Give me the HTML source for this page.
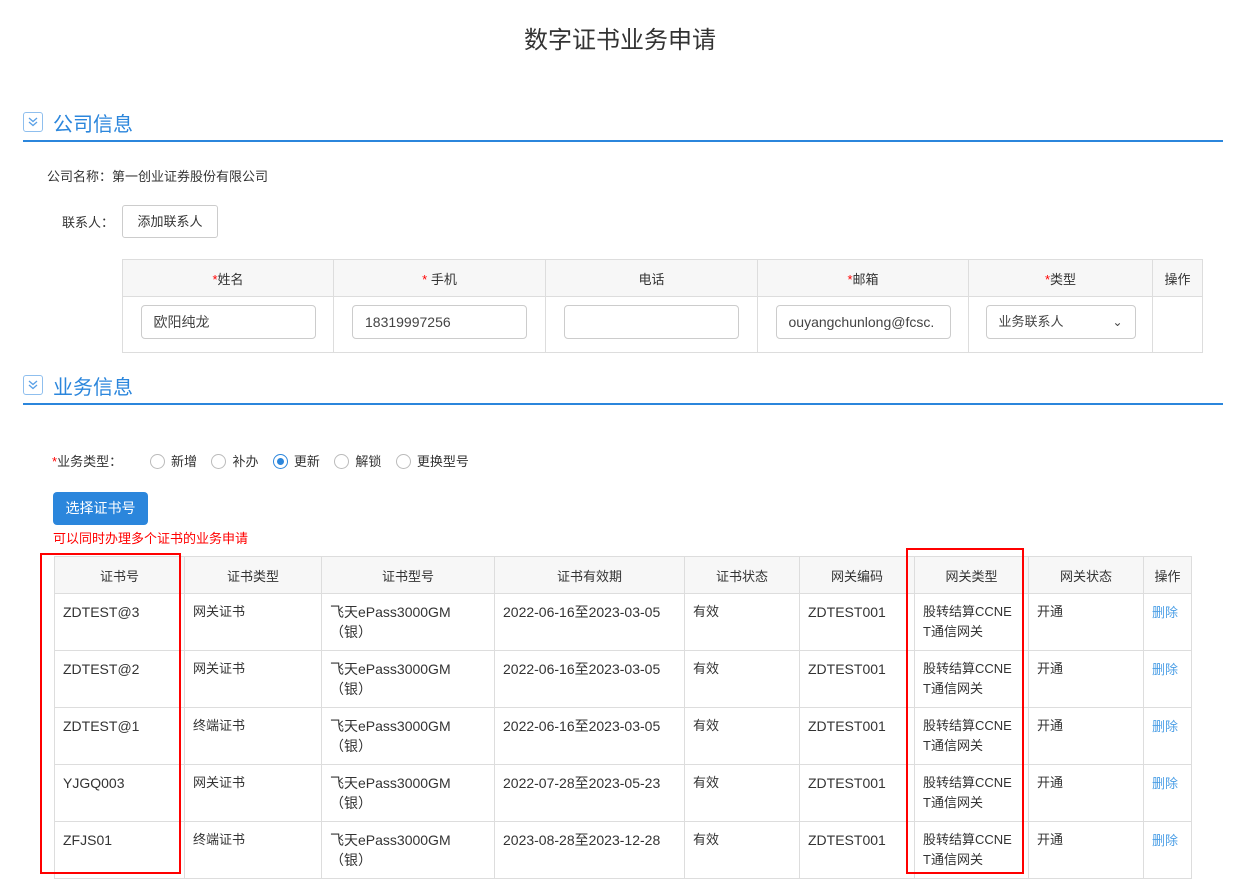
<!DOCTYPE html>
<html><head><meta charset="utf-8"><style>
*{box-sizing:border-box;margin:0;padding:0}
body{width:1240px;height:882px;background:#fff;font-family:"Liberation Sans","Noto Sans CJK SC",sans-serif;color:#333;font-size:13px;position:relative;overflow:hidden}
.a{position:absolute}
.title{left:0;width:1240px;top:20px;text-align:center;font-size:24px;color:#333}
.sec{left:23px;width:1200px;height:24px;border-bottom:2px solid #2b86dc}
.sec .ic{position:absolute;left:0;top:-6px;width:20px;height:20px;border:1px solid #8fbfee;border-radius:3px}
.sec .t{position:absolute;left:30px;top:-10px;font-size:20px;color:#2b86dc}
table{border-collapse:collapse;position:absolute}
td,th{border:1px solid #ddd;font-weight:normal;font-size:13px}
th{background:#f7f7f7;height:37px}
.inp{border:1px solid #ccc;border-radius:4px;height:34px;padding:0 12px;line-height:32px;font-size:14px;color:#444;margin:0 auto}
.t1 td{vertical-align:top;padding-top:8px}
.req{color:#f00}
.t2 td{vertical-align:top;padding:8px 8px 0;font-size:14px;line-height:20px;height:57px}
.t2 th{font-size:13px}
.radio{display:inline-block;width:15px;height:15px;border:1px solid #bbb;border-radius:50%;vertical-align:-3px;margin-right:6px}
.on{border-color:#2b86dc;position:relative}
.on:after{content:"";position:absolute;left:3px;top:3px;width:7px;height:7px;border-radius:50%;background:#2b86dc}
.lnk{color:#4a9ee6;font-size:13px}
</style></head><body>
<div class="a title">数字证书业务申请</div>
<div class="a sec" style="top:118px"><div class="ic"><svg width="18" height="18" viewBox="0 0 18 18"><path d="M5 5l4 3.5 4-3.5M5 9l4 3.5 4-3.5" fill="none" stroke="#5aa0e6" stroke-width="1.3"/></svg></div><div class="t">公司信息</div></div>
<div class="a" style="left:47px;top:166px">公司名称：第一创业证券股份有限公司</div>
<div class="a" style="left:62px;top:212px">联系人：</div>
<div class="a" style="left:122px;top:205px;width:96px;height:33px;border:1px solid #ccc;border-radius:3px;text-align:center;line-height:31px">添加联系人</div>
<table class="t1" style="left:122px;top:259px;width:1081px">
<tr><th style="width:211px;height:36px"><span class="req">*</span>姓名</th><th style="width:212px"><span class="req">* </span>手机</th><th style="width:212px">电话</th><th style="width:211px"><span class="req">*</span>邮箱</th><th style="width:184px"><span class="req">*</span>类型</th><th>操作</th></tr>
<tr style="height:56px"><td><div class="inp" style="width:175px">欧阳纯龙</div></td><td><div class="inp" style="width:175px">18319997256</div></td><td><div class="inp" style="width:175px"></div></td><td><div class="inp" style="width:175px;overflow:hidden;white-space:nowrap">ouyangchunlong@fcsc.</div></td><td><div class="inp" style="width:150px;font-size:13px">业务联系人<span style="float:right;font-size:12px">⌄</span></div></td><td></td></tr>
</table>
<div class="a sec" style="top:381px"><div class="ic"><svg width="18" height="18" viewBox="0 0 18 18"><path d="M5 5l4 3.5 4-3.5M5 9l4 3.5 4-3.5" fill="none" stroke="#5aa0e6" stroke-width="1.3"/></svg></div><div class="t">业务信息</div></div>
<div class="a" style="left:52px;top:451px"><span class="req">*</span>业务类型：</div>
<div class="a" style="left:150px;top:451px;font-size:13px"><span class="radio"></span>新增&nbsp;&nbsp;&nbsp; <span class="radio"></span>补办&nbsp;&nbsp;&nbsp; <span class="radio on"></span>更新&nbsp;&nbsp;&nbsp; <span class="radio"></span>解锁&nbsp;&nbsp;&nbsp; <span class="radio"></span>更换型号</div>
<div class="a" style="left:53px;top:492px;width:95px;height:33px;background:#2b86dc;border-radius:4px;color:#fff;text-align:center;line-height:33px;font-size:14px">选择证书号</div>
<div class="a" style="left:53px;top:528px;color:#f00;font-size:13px">可以同时办理多个证书的业务申请</div>
<table class="t2" style="left:54px;top:556px;width:1138px">
<tr><th style="width:130px">证书号</th><th style="width:137px">证书类型</th><th style="width:173px">证书型号</th><th style="width:190px">证书有效期</th><th style="width:115px">证书状态</th><th style="width:115px">网关编码</th><th style="width:114px">网关类型</th><th style="width:115px">网关状态</th><th>操作</th></tr>
<tr><td>ZDTEST@3</td><td style="font-size:13px">网关证书</td><td>飞天ePass3000GM<br>（银）</td><td>2022-06-16至2023-03-05</td><td style="font-size:13px">有效</td><td>ZDTEST001</td><td style="font-size:13px">股转结算CCNE<br>T通信网关</td><td style="font-size:13px">开通</td><td><span class="lnk">删除</span></td></tr>
<tr><td>ZDTEST@2</td><td style="font-size:13px">网关证书</td><td>飞天ePass3000GM<br>（银）</td><td>2022-06-16至2023-03-05</td><td style="font-size:13px">有效</td><td>ZDTEST001</td><td style="font-size:13px">股转结算CCNE<br>T通信网关</td><td style="font-size:13px">开通</td><td><span class="lnk">删除</span></td></tr>
<tr><td>ZDTEST@1</td><td style="font-size:13px">终端证书</td><td>飞天ePass3000GM<br>（银）</td><td>2022-06-16至2023-03-05</td><td style="font-size:13px">有效</td><td>ZDTEST001</td><td style="font-size:13px">股转结算CCNE<br>T通信网关</td><td style="font-size:13px">开通</td><td><span class="lnk">删除</span></td></tr>
<tr><td>YJGQ003</td><td style="font-size:13px">网关证书</td><td>飞天ePass3000GM<br>（银）</td><td>2022-07-28至2023-05-23</td><td style="font-size:13px">有效</td><td>ZDTEST001</td><td style="font-size:13px">股转结算CCNE<br>T通信网关</td><td style="font-size:13px">开通</td><td><span class="lnk">删除</span></td></tr>
<tr><td>ZFJS01</td><td style="font-size:13px">终端证书</td><td>飞天ePass3000GM<br>（银）</td><td>2023-08-28至2023-12-28</td><td style="font-size:13px">有效</td><td>ZDTEST001</td><td style="font-size:13px">股转结算CCNE<br>T通信网关</td><td style="font-size:13px">开通</td><td><span class="lnk">删除</span></td></tr>
</table>
<div class="a" style="left:40px;top:553px;width:141px;height:321px;border:2px solid #f00"></div>
<div class="a" style="left:906px;top:548px;width:118px;height:326px;border:2px solid #f00"></div>
</body></html>
